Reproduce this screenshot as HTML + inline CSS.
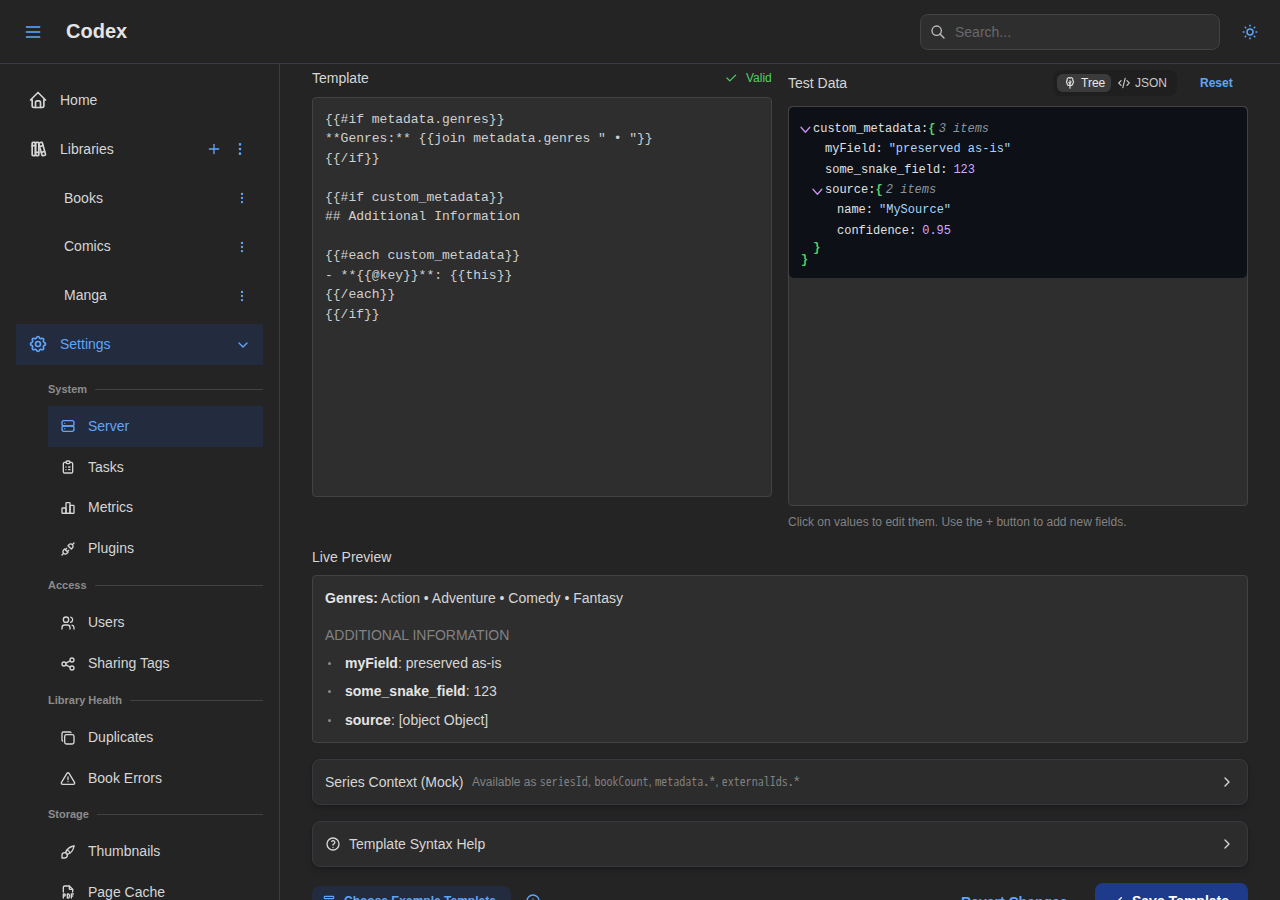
<!DOCTYPE html>
<html lang="en">
<head>
<meta charset="utf-8">
<title>Codex</title>
<style>
*{box-sizing:border-box;margin:0;padding:0}
html,body{width:1280px;height:900px;overflow:hidden;background:#242424;color:#c9c9c9;
  font-family:"Liberation Sans",Arial,sans-serif;font-size:14px;line-height:1.55}
.abs{position:absolute}
svg.ic{fill:none;stroke:currentColor;stroke-width:2;stroke-linecap:round;stroke-linejoin:round;display:block}
/* header */
#header{position:absolute;left:0;top:0;width:1280px;height:64px;border-bottom:1px solid #3a3d47;background:#242424;z-index:5}
#logo{position:absolute;left:66px;top:16px;font-size:20px;font-weight:700;line-height:31px;color:#e4e4e4}
#search{position:absolute;left:920px;top:14px;width:300px;height:36px;background:#2e2e2e;border:1px solid #424242;border-radius:8px}
#search span{position:absolute;left:34px;top:0;line-height:34px;font-size:14px;color:#696969}
/* navbar */
#nav{position:absolute;left:0;top:64px;width:280px;height:836px;border-right:1px solid #3b3b44;background:#242424;overflow:hidden}
.nl{position:absolute;left:16px;width:247px;height:41px;color:#d6d6d6}
.nl .ic{position:absolute;left:12px;top:10px}
.nl .lb{position:absolute;left:44px;top:0;line-height:41px;font-size:14px;white-space:nowrap}
.nl.sub{left:48px;width:215px}
.nl.sub .ic{top:12.5px}
.nl.sub .lb{left:40px}
.nl.lib .lb{left:48px}
.act{background:#232b3f;color:#60a5fa}
.sec{position:absolute;left:48px;width:215px;height:16px;font-size:11px;font-weight:700;color:#8c8c8c;line-height:16px;white-space:nowrap}
.sec i{position:absolute;right:0;top:8px;height:1px;background:#424242}
.blue{color:#60a5fa}
/* main */
#main{position:absolute;left:0;top:0;width:1280px;height:900px;overflow:hidden}
code{font-family:"WenQuanYi Zen Hei Mono","WenQuanYi Zen Hei",monospace;font-size:12px}
.lab{position:absolute;font-size:14px;line-height:22px;color:#d6d6d6;white-space:nowrap}
.box{position:absolute;background:#2e2e2e;border:1px solid #424242;border-radius:4px}
.mono{font-family:"Liberation Mono","DejaVu Sans Mono",monospace}
</style>
</head>
<body>
<div id="header">
  <svg class="abs" style="left:24px;top:23px" width="18" height="18" viewBox="0 0 18 18" fill="#508ccd"><rect x="1.7" y="3" width="14.7" height="2" rx="0.8"/><rect x="1.7" y="8" width="14.7" height="2" rx="0.8"/><rect x="1.7" y="13" width="14.7" height="2" rx="0.8"/></svg>
  <div id="logo">Codex</div>
  <div id="search">
    <svg class="ic abs" style="left:9px;top:9px;color:#bdbdbd" width="16" height="16" viewBox="0 0 24 24" stroke-width="1.75"><path d="M10 10m-7 0a7 7 0 1 0 14 0a7 7 0 1 0 -14 0"/><path d="M21 21l-6 -6"/></svg>
    <span>Search...</span>
  </div>
  <svg class="ic abs blue" style="left:1241px;top:23px" width="18" height="18" viewBox="0 0 24 24"><path d="M12 12m-4 0a4 4 0 1 0 8 0a4 4 0 1 0 -8 0"/><path d="M3 12h1m8 -9v1m8 8h1m-9 8v1m-6.400 -15.400l.7 .7m12.100 -.7l-.7 .7m0 11.400l.7 .7m-12.100 -.7l-.7 .7"/></svg>
</div>

<div id="nav">
<!--NAV-->
<div class="nl " style="top:16px"><svg class="ic" style="" width="20" height="20" viewBox="0 0 24 24" stroke-width="1.5"><path d="M5 12l-2 0l9 -9l9 9l-2 0"/><path d="M5 12v7a2 2 0 0 0 2 2h10a2 2 0 0 0 2 -2v-7"/><path d="M9 21v-6a2 2 0 0 1 2 -2h2a2 2 0 0 1 2 2v6"/></svg><span class="lb">Home</span></div>
<div class="nl " style="top:64.8px"><svg class="ic" style="" width="20" height="20" viewBox="0 0 24 24" stroke-width="1.5"><path d="M5 4m0 1a1 1 0 0 1 1 -1h2a1 1 0 0 1 1 1v14a1 1 0 0 1 -1 1h-2a1 1 0 0 1 -1 -1z"/><path d="M9 4m0 1a1 1 0 0 1 1 -1h2a1 1 0 0 1 1 1v14a1 1 0 0 1 -1 1h-2a1 1 0 0 1 -1 -1z"/><path d="M5 8h4"/><path d="M9 16h4"/><path d="M13.803 4.56l2.184 -.53c.562 -.135 1.133 .19 1.282 .732l3.695 13.418a1.02 1.02 0 0 1 -.634 1.219l-.133 .041l-2.184 .53c-.562 .135 -1.133 -.19 -1.282 -.732l-3.695 -13.418a1.02 1.02 0 0 1 .634 -1.219l.133 -.041z"/><path d="M14 9l4 -1"/><path d="M16 16l3.923 -.98"/></svg><span class="lb">Libraries</span><svg class="ic" style="left:190px;top:12.5px;color:#60a5fa" width="16" height="16" viewBox="0 0 24 24" stroke-width="1.75"><path d="M12 5l0 14"/><path d="M5 12l14 0"/></svg><svg class="ic" style="left:216px;top:12.5px;color:#60a5fa" width="16" height="16" viewBox="0 0 24 24" stroke-width="1.75"><path d="M12 12m-1 0a1 1 0 1 0 2 0a1 1 0 1 0 -2 0"/><path d="M12 19m-1 0a1 1 0 1 0 2 0a1 1 0 1 0 -2 0"/><path d="M12 5m-1 0a1 1 0 1 0 2 0a1 1 0 1 0 -2 0"/></svg></div>
<div class="nl lib" style="top:113.6px"><span class="lb">Books</span><svg class="ic" style="left:219px;top:13.4px;color:#60a5fa" width="14" height="14" viewBox="0 0 24 24" stroke-width="1.75"><path d="M12 12m-1 0a1 1 0 1 0 2 0a1 1 0 1 0 -2 0"/><path d="M12 19m-1 0a1 1 0 1 0 2 0a1 1 0 1 0 -2 0"/><path d="M12 5m-1 0a1 1 0 1 0 2 0a1 1 0 1 0 -2 0"/></svg></div>
<div class="nl lib" style="top:162.4px"><span class="lb">Comics</span><svg class="ic" style="left:219px;top:13.4px;color:#60a5fa" width="14" height="14" viewBox="0 0 24 24" stroke-width="1.75"><path d="M12 12m-1 0a1 1 0 1 0 2 0a1 1 0 1 0 -2 0"/><path d="M12 19m-1 0a1 1 0 1 0 2 0a1 1 0 1 0 -2 0"/><path d="M12 5m-1 0a1 1 0 1 0 2 0a1 1 0 1 0 -2 0"/></svg></div>
<div class="nl lib" style="top:211.2px"><span class="lb">Manga</span><svg class="ic" style="left:219px;top:13.4px;color:#60a5fa" width="14" height="14" viewBox="0 0 24 24" stroke-width="1.75"><path d="M12 12m-1 0a1 1 0 1 0 2 0a1 1 0 1 0 -2 0"/><path d="M12 19m-1 0a1 1 0 1 0 2 0a1 1 0 1 0 -2 0"/><path d="M12 5m-1 0a1 1 0 1 0 2 0a1 1 0 1 0 -2 0"/></svg></div>
<div class="nl act" style="top:260px"><svg class="ic" style="" width="20" height="20" viewBox="0 0 24 24" stroke-width="1.5"><path d="M10.325 4.317c.426 -1.756 2.924 -1.756 3.35 0a1.724 1.724 0 0 0 2.573 1.066c1.543 -.94 3.31 .826 2.37 2.37a1.724 1.724 0 0 0 1.065 2.572c1.756 .426 1.756 2.924 0 3.35a1.724 1.724 0 0 0 -1.066 2.573c.94 1.543 -.826 3.31 -2.37 2.37a1.724 1.724 0 0 0 -2.572 1.065c-.426 1.756 -2.924 1.756 -3.35 0a1.724 1.724 0 0 0 -2.573 -1.066c-1.543 .94 -3.31 -.826 -2.37 -2.37a1.724 1.724 0 0 0 -1.065 -2.572c-1.756 -.426 -1.756 -2.924 0 -3.35a1.724 1.724 0 0 0 1.066 -2.573c-.94 -1.543 .826 -3.31 2.37 -2.37c1 .608 2.296 .07 2.572 -1.065z"/><path d="M9 12a3 3 0 1 0 6 0a3 3 0 0 0 -6 0"/></svg><span class="lb">Settings</span><svg class="ic" style="left:219px;top:13px" width="16" height="16" viewBox="0 0 24 24" stroke-width="1.3"><path d="M6 9l6 6l6 -6"/></svg></div>
<div class="sec" style="top:317px">System<i style="left:47px"></i></div>
<div class="nl sub act" style="top:342px"><svg class="ic" style="top:12px" width="16" height="16" viewBox="0 0 24 24" stroke-width="1.5"><path d="M3 4m0 3a3 3 0 0 1 3 -3h12a3 3 0 0 1 3 3v2a3 3 0 0 1 -3 3h-12a3 3 0 0 1 -3 -3z"/><path d="M3 12m0 3a3 3 0 0 1 3 -3h12a3 3 0 0 1 3 3v2a3 3 0 0 1 -3 3h-12a3 3 0 0 1 -3 -3z"/><path d="M7 8l0 .01"/><path d="M7 16l0 .01"/></svg><span class="lb">Server</span></div>
<div class="nl sub " style="top:382.8px"><svg class="ic" style="" width="16" height="16" viewBox="0 0 24 24" stroke-width="1.5"><path d="M9 5h-2a2 2 0 0 0 -2 2v12a2 2 0 0 0 2 2h10a2 2 0 0 0 2 -2v-12a2 2 0 0 0 -2 -2h-2"/><path d="M9 3m0 2a2 2 0 0 1 2 -2h2a2 2 0 0 1 2 2v0a2 2 0 0 1 -2 2h-2a2 2 0 0 1 -2 -2z"/><path d="M9 12l.01 0"/><path d="M13 12l2 0"/><path d="M9 16l.01 0"/><path d="M13 16l2 0"/></svg><span class="lb">Tasks</span></div>
<div class="nl sub " style="top:423px"><svg class="ic" style="" width="16" height="16" viewBox="0 0 24 24" stroke-width="1.5"><path d="M3 13a1 1 0 0 1 1 -1h4a1 1 0 0 1 1 1v6a1 1 0 0 1 -1 1h-4a1 1 0 0 1 -1 -1z"/><path d="M15 9a1 1 0 0 1 1 -1h4a1 1 0 0 1 1 1v10a1 1 0 0 1 -1 1h-4a1 1 0 0 1 -1 -1z"/><path d="M9 5a1 1 0 0 1 1 -1h4a1 1 0 0 1 1 1v14a1 1 0 0 1 -1 1h-4a1 1 0 0 1 -1 -1z"/><path d="M4 20h14"/></svg><span class="lb">Metrics</span></div>
<div class="nl sub " style="top:464.4px"><svg class="ic" style="" width="16" height="16" viewBox="0 0 24 24" stroke-width="1.5"><path d="M7 12l5 5l-1.5 1.5a3.536 3.536 0 1 1 -5 -5l1.5 -1.5z"/><path d="M17 12l-5 -5l1.5 -1.5a3.536 3.536 0 1 1 5 5l-1.5 1.5z"/><path d="M3 21l2.500 -2.500"/><path d="M18.500 5.500l2.500 -2.500"/><path d="M10 11l-2 2"/><path d="M13 14l-2 2"/></svg><span class="lb">Plugins</span></div>
<div class="sec" style="top:513px">Access<i style="left:47px"></i></div>
<div class="nl sub " style="top:538.4px"><svg class="ic" style="" width="16" height="16" viewBox="0 0 24 24" stroke-width="1.5"><path d="M9 7m-4 0a4 4 0 1 0 8 0a4 4 0 1 0 -8 0"/><path d="M3 21v-2a4 4 0 0 1 4 -4h4a4 4 0 0 1 4 4v2"/><path d="M16 3.130a4 4 0 0 1 0 7.750"/><path d="M21 21v-2a4 4 0 0 0 -3 -3.850"/></svg><span class="lb">Users</span></div>
<div class="nl sub " style="top:579.2px"><svg class="ic" style="" width="16" height="16" viewBox="0 0 24 24" stroke-width="1.5"><path d="M6 12m-3 0a3 3 0 1 0 6 0a3 3 0 1 0 -6 0"/><path d="M18 6m-3 0a3 3 0 1 0 6 0a3 3 0 1 0 -6 0"/><path d="M18 18m-3 0a3 3 0 1 0 6 0a3 3 0 1 0 -6 0"/><path d="M8.700 10.700l6.600 -3.400"/><path d="M8.700 13.300l6.600 3.400"/></svg><span class="lb">Sharing Tags</span></div>
<div class="sec" style="top:627.5px">Library Health<i style="left:82px"></i></div>
<div class="nl sub " style="top:653.2px"><svg class="ic" style="" width="16" height="16" viewBox="0 0 24 24" stroke-width="1.5"><path d="M7 7m0 2.667a2.667 2.667 0 0 1 2.667 -2.667h8.666a2.667 2.667 0 0 1 2.667 2.667v8.666a2.667 2.667 0 0 1 -2.667 2.667h-8.666a2.667 2.667 0 0 1 -2.667 -2.667z"/><path d="M4.012 16.737a2.005 2.005 0 0 1 -1.012 -1.737v-10c0 -1.100 .900 -2 2 -2h10c.750 0 1.158 .385 1.500 1"/></svg><span class="lb">Duplicates</span></div>
<div class="nl sub " style="top:694.0px"><svg class="ic" style="" width="16" height="16" viewBox="0 0 24 24" stroke-width="1.5"><path d="M12 9v4"/><path d="M10.363 3.591l-8.106 13.534a1.914 1.914 0 0 0 1.636 2.871h16.214a1.914 1.914 0 0 0 1.636 -2.870l-8.106 -13.536a1.914 1.914 0 0 0 -3.274 0z"/><path d="M12 16h.01"/></svg><span class="lb">Book Errors</span></div>
<div class="sec" style="top:741.5px">Storage<i style="left:49px"></i></div>
<div class="nl sub " style="top:767px"><svg class="ic" style="" width="16" height="16" viewBox="0 0 24 24" stroke-width="1.5"><path d="M3 21v-4a4 4 0 1 1 4 4h-4"/><path d="M21 3a16 16 0 0 0 -12.800 10.200"/><path d="M21 3a16 16 0 0 1 -10.200 12.800"/><path d="M10.600 9a9 9 0 0 1 4.400 4.400"/></svg><span class="lb">Thumbnails</span></div>
<div class="nl sub " style="top:807.8px"><svg class="ic" style="" width="16" height="16" viewBox="0 0 24 24" stroke-width="1.5"><path d="M14 3v4a1 1 0 0 0 1 1h4"/><path d="M5 12v-7a2 2 0 0 1 2 -2h7l5 5v4"/><path d="M5 18h1.500a1.500 1.500 0 0 0 0 -3h-1.500v6"/><path d="M17 18h2"/><path d="M20 15h-3v6"/><path d="M11 15v6h1a2 2 0 0 0 2 -2v-2a2 2 0 0 0 -2 -2h-1z"/></svg><span class="lb">Page Cache</span></div>
<!--/NAV-->
</div>

<div id="main">
<!--MAIN-->
<div class="lab" style="left:312px;top:67px">Template</div>
<svg class="ic" style="position:absolute;left:724px;top:71px;color:#51cf66;" width="14" height="14" viewBox="0 0 24 24" stroke-width="1.75"><path d="M5 12l5 5l10 -10"/></svg>
<div class="lab" style="left:746px;top:67px;font-size:12px;color:#51cf66">Valid</div>
<div class="box" style="left:312px;top:97px;width:460px;height:400px"><pre class="mono" style="position:absolute;left:12px;top:11.7px;font-size:13px;line-height:19.5px;color:#d0d0d0">{{#if metadata.genres}}
**Genres:** {{join metadata.genres " • "}}
{{/if}}

{{#if custom_metadata}}
## Additional Information

{{#each custom_metadata}}
- **{{@key}}**: {{this}}
{{/each}}
{{/if}}</pre></div>
<div class="lab" style="left:788px;top:72px">Test Data</div>
<div class="abs" style="left:1053px;top:70px;width:124px;height:26px;background:#1f1f1f;border-radius:8px"></div>
<div class="abs" style="left:1057px;top:74px;width:54px;height:18px;background:#3b3b3b;border-radius:6px"></div>
<svg class="ic" style="position:absolute;left:1063px;top:76px;color:#e0e0e0;" width="14" height="14" viewBox="0 0 24 24" stroke-width="2"><path d="M12 13l-2 -2"/><path d="M12 12l2 -2"/><path d="M12 21v-13"/><path d="M9.824 16a3 3 0 0 1 -2.743 -3.690a3 3 0 0 1 .304 -4.833a3 3 0 0 1 4.615 -3.707a3 3 0 0 1 4.614 3.707a3 3 0 0 1 .305 4.833a3 3 0 0 1 -2.919 3.695h-4z"/></svg>
<div class="lab" style="left:1081px;top:72px;font-size:12px;color:#e8e8e8">Tree</div>
<svg class="ic" style="position:absolute;left:1117px;top:76px;color:#c9c9c9;" width="14" height="14" viewBox="0 0 24 24" stroke-width="2"><path d="M7 8l-4 4l4 4"/><path d="M17 8l4 4l-4 4"/><path d="M14 4l-4 16"/></svg>
<div class="lab" style="left:1135px;top:72px;font-size:12px;color:#c9c9c9">JSON</div>
<div class="lab" style="left:1200px;top:72px;font-size:12px;font-weight:700;color:#60a5fa">Reset</div>
<div class="box" style="left:788px;top:106px;width:460px;height:400px"><div class="abs" style="left:0;top:0;width:458px;height:171px;background:#0d1017;border-radius:5px"><svg class="abs" style="left:10.65px;top:19px;color:#c792ea;fill:none;stroke:currentColor;stroke-linecap:round;stroke-linejoin:round" width="12" height="9" viewBox="0 0 12 9" stroke-width="1.3"><path d="M1 1.2l4.4 5l4.4 -5"/></svg><div class="abs mono" style="left:24px;top:12px;font-size:12px;line-height:20px;white-space:pre;color:#e0e0e0">custom_metadata<span>:</span><b style="color:#56d364">{</b><i style="color:#8b949e;margin-left:3.2px">3 items</i></div><div class="abs mono" style="left:36px;top:32px;font-size:12px;line-height:20px;white-space:pre;color:#e0e0e0">myField<span>:</span><span style="color:#a5d6ff;margin-left:6px">"preserved as-is"</span></div><div class="abs mono" style="left:36px;top:53px;font-size:12px;line-height:20px;white-space:pre;color:#e0e0e0">some_snake_field<span>:</span><span style="color:#d2a8ff;margin-left:6px">123</span></div><svg class="abs" style="left:22.55px;top:81.2px;color:#c792ea;fill:none;stroke:currentColor;stroke-linecap:round;stroke-linejoin:round" width="12" height="9" viewBox="0 0 12 9" stroke-width="1.3"><path d="M1 1.2l4.4 5l4.4 -5"/></svg><div class="abs mono" style="left:36px;top:73px;font-size:12px;line-height:20px;white-space:pre;color:#e0e0e0">source<span>:</span><b style="color:#56d364">{</b><i style="color:#8b949e;margin-left:3.2px">2 items</i></div><div class="abs mono" style="left:48px;top:93px;font-size:12px;line-height:20px;white-space:pre;color:#e0e0e0">name<span>:</span><span style="color:#a5d6ff;margin-left:6px">"MySource"</span></div><div class="abs mono" style="left:48px;top:114px;font-size:12px;line-height:20px;white-space:pre;color:#e0e0e0">confidence<span>:</span><span style="color:#d2a8ff;margin-left:6px">0.95</span></div><div class="abs mono" style="left:24.3px;top:131px;font-size:12px;line-height:20px;white-space:pre;color:#e0e0e0"><b style="color:#56d364">}</b></div><div class="abs mono" style="left:12px;top:142.5px;font-size:12px;line-height:20px;white-space:pre;color:#e0e0e0"><b style="color:#56d364">}</b></div></div></div>
<div class="lab" style="left:788px;top:511px;font-size:12px;color:#828282">Click on values to edit them. Use the + button to add new fields.</div>
<div class="lab" style="left:312px;top:546px">Live Preview</div>
<div class="box" style="left:312px;top:575px;width:936px;height:168px"><div class="lab" style="left:12px;top:11px;color:#d6d6d6"><b style="color:#e4e4e4">Genres:</b> Action • Adventure • Comedy • Fantasy</div><div class="lab" style="left:12px;top:48px;color:#828282">ADDITIONAL INFORMATION</div><div class="abs" style="left:14.5px;top:85.5px;width:3.5px;height:3.5px;border-radius:50%;background:#8a8a8a"></div><div class="lab" style="left:32px;top:76px;color:#d6d6d6"><b style="color:#e4e4e4">myField</b>: preserved as-is</div><div class="abs" style="left:14.5px;top:113.5px;width:3.5px;height:3.5px;border-radius:50%;background:#8a8a8a"></div><div class="lab" style="left:32px;top:104px;color:#d6d6d6"><b style="color:#e4e4e4">some_snake_field</b>: 123</div><div class="abs" style="left:14.5px;top:142.5px;width:3.5px;height:3.5px;border-radius:50%;background:#8a8a8a"></div><div class="lab" style="left:32px;top:133px;color:#d6d6d6"><b style="color:#e4e4e4">source</b>: [object Object]</div></div>
<div class="box" style="left:312px;top:759px;width:936px;height:46px;border-radius:8px;background:#2c2c2c;border-color:#383841;box-shadow:0 1px 3px rgba(0,0,0,.2),0 6px 10px -3px rgba(0,0,0,.16)"><div class="lab" style="left:12px;top:11px">Series Context (Mock)</div><div class="lab" style="left:159px;top:11px;font-size:12px;color:#828282">Available as <code>seriesId</code>, <code>bookCount</code>, <code>metadata.*</code>, <code>externalIds.*</code></div><svg class="ic" style="position:absolute;left:906px;top:14px;color:#d6d6d6;" width="16" height="16" viewBox="0 0 24 24" stroke-width="1.75"><path d="M9 6l6 6l-6 6"/></svg></div>
<div class="box" style="left:312px;top:821px;width:936px;height:46px;border-radius:8px;background:#2c2c2c;border-color:#383841;box-shadow:0 1px 3px rgba(0,0,0,.2),0 6px 10px -3px rgba(0,0,0,.16)"><svg class="ic" style="position:absolute;left:12px;top:14px;color:#d6d6d6;" width="16" height="16" viewBox="0 0 24 24" stroke-width="1.75"><path d="M12 12m-9 0a9 9 0 1 0 18 0a9 9 0 1 0 -18 0"/><path d="M12 17l0 .01"/><path d="M12 13.500a1.500 1.500 0 0 1 1 -1.500a2.600 2.600 0 1 0 -3 -4"/></svg><div class="lab" style="left:36px;top:11px">Template Syntax Help</div><svg class="ic" style="position:absolute;left:906px;top:14px;color:#d6d6d6;" width="16" height="16" viewBox="0 0 24 24" stroke-width="1.75"><path d="M9 6l6 6l-6 6"/></svg></div>
<div class="abs" style="left:312px;top:886px;width:199px;height:36px;border-radius:8px;background:#232b3f"></div>
<svg class="ic" style="position:absolute;left:322px;top:894.3px;color:#60a5fa;" width="14" height="14" viewBox="0 0 24 24" stroke-width="2"><path d="M4 4m0 1a1 1 0 0 1 1 -1h14a1 1 0 0 1 1 1v2a1 1 0 0 1 -1 1h-14a1 1 0 0 1 -1 -1z"/><path d="M4 12m0 1a1 1 0 0 1 1 -1h4a1 1 0 0 1 1 1v6a1 1 0 0 1 -1 1h-4a1 1 0 0 1 -1 -1z"/><path d="M14 12l6 0"/><path d="M14 16l6 0"/><path d="M14 20l6 0"/></svg>
<div class="lab" style="left:344px;top:890px;font-size:12px;font-weight:700;color:#60a5fa">Choose Example Template</div>
<svg class="ic" style="position:absolute;left:525px;top:892.75px;color:#60a5fa;" width="16" height="16" viewBox="0 0 24 24" stroke-width="1.75"><path d="M3 12a9 9 0 1 0 18 0a9 9 0 0 0 -18 0"/><path d="M12 9h.01"/><path d="M11 12h1v4h1"/></svg>
<div class="lab" style="left:961px;top:891px;font-size:14px;font-weight:700;color:#60a5fa">Revert Changes</div>
<div class="abs" style="left:1095px;top:883px;width:153px;height:36px;border-radius:8px;background:#1e3a8a"></div>
<svg class="ic" style="position:absolute;left:1108px;top:893px;color:#ffffff;" width="16" height="16" viewBox="0 0 24 24" stroke-width="2"><path d="M5 12l5 5l10 -10"/></svg>
<div class="lab" style="left:1132px;top:890px;font-size:14px;font-weight:700;color:#ffffff">Save Template</div>
<!--/MAIN-->
</div>
</body>
</html>
